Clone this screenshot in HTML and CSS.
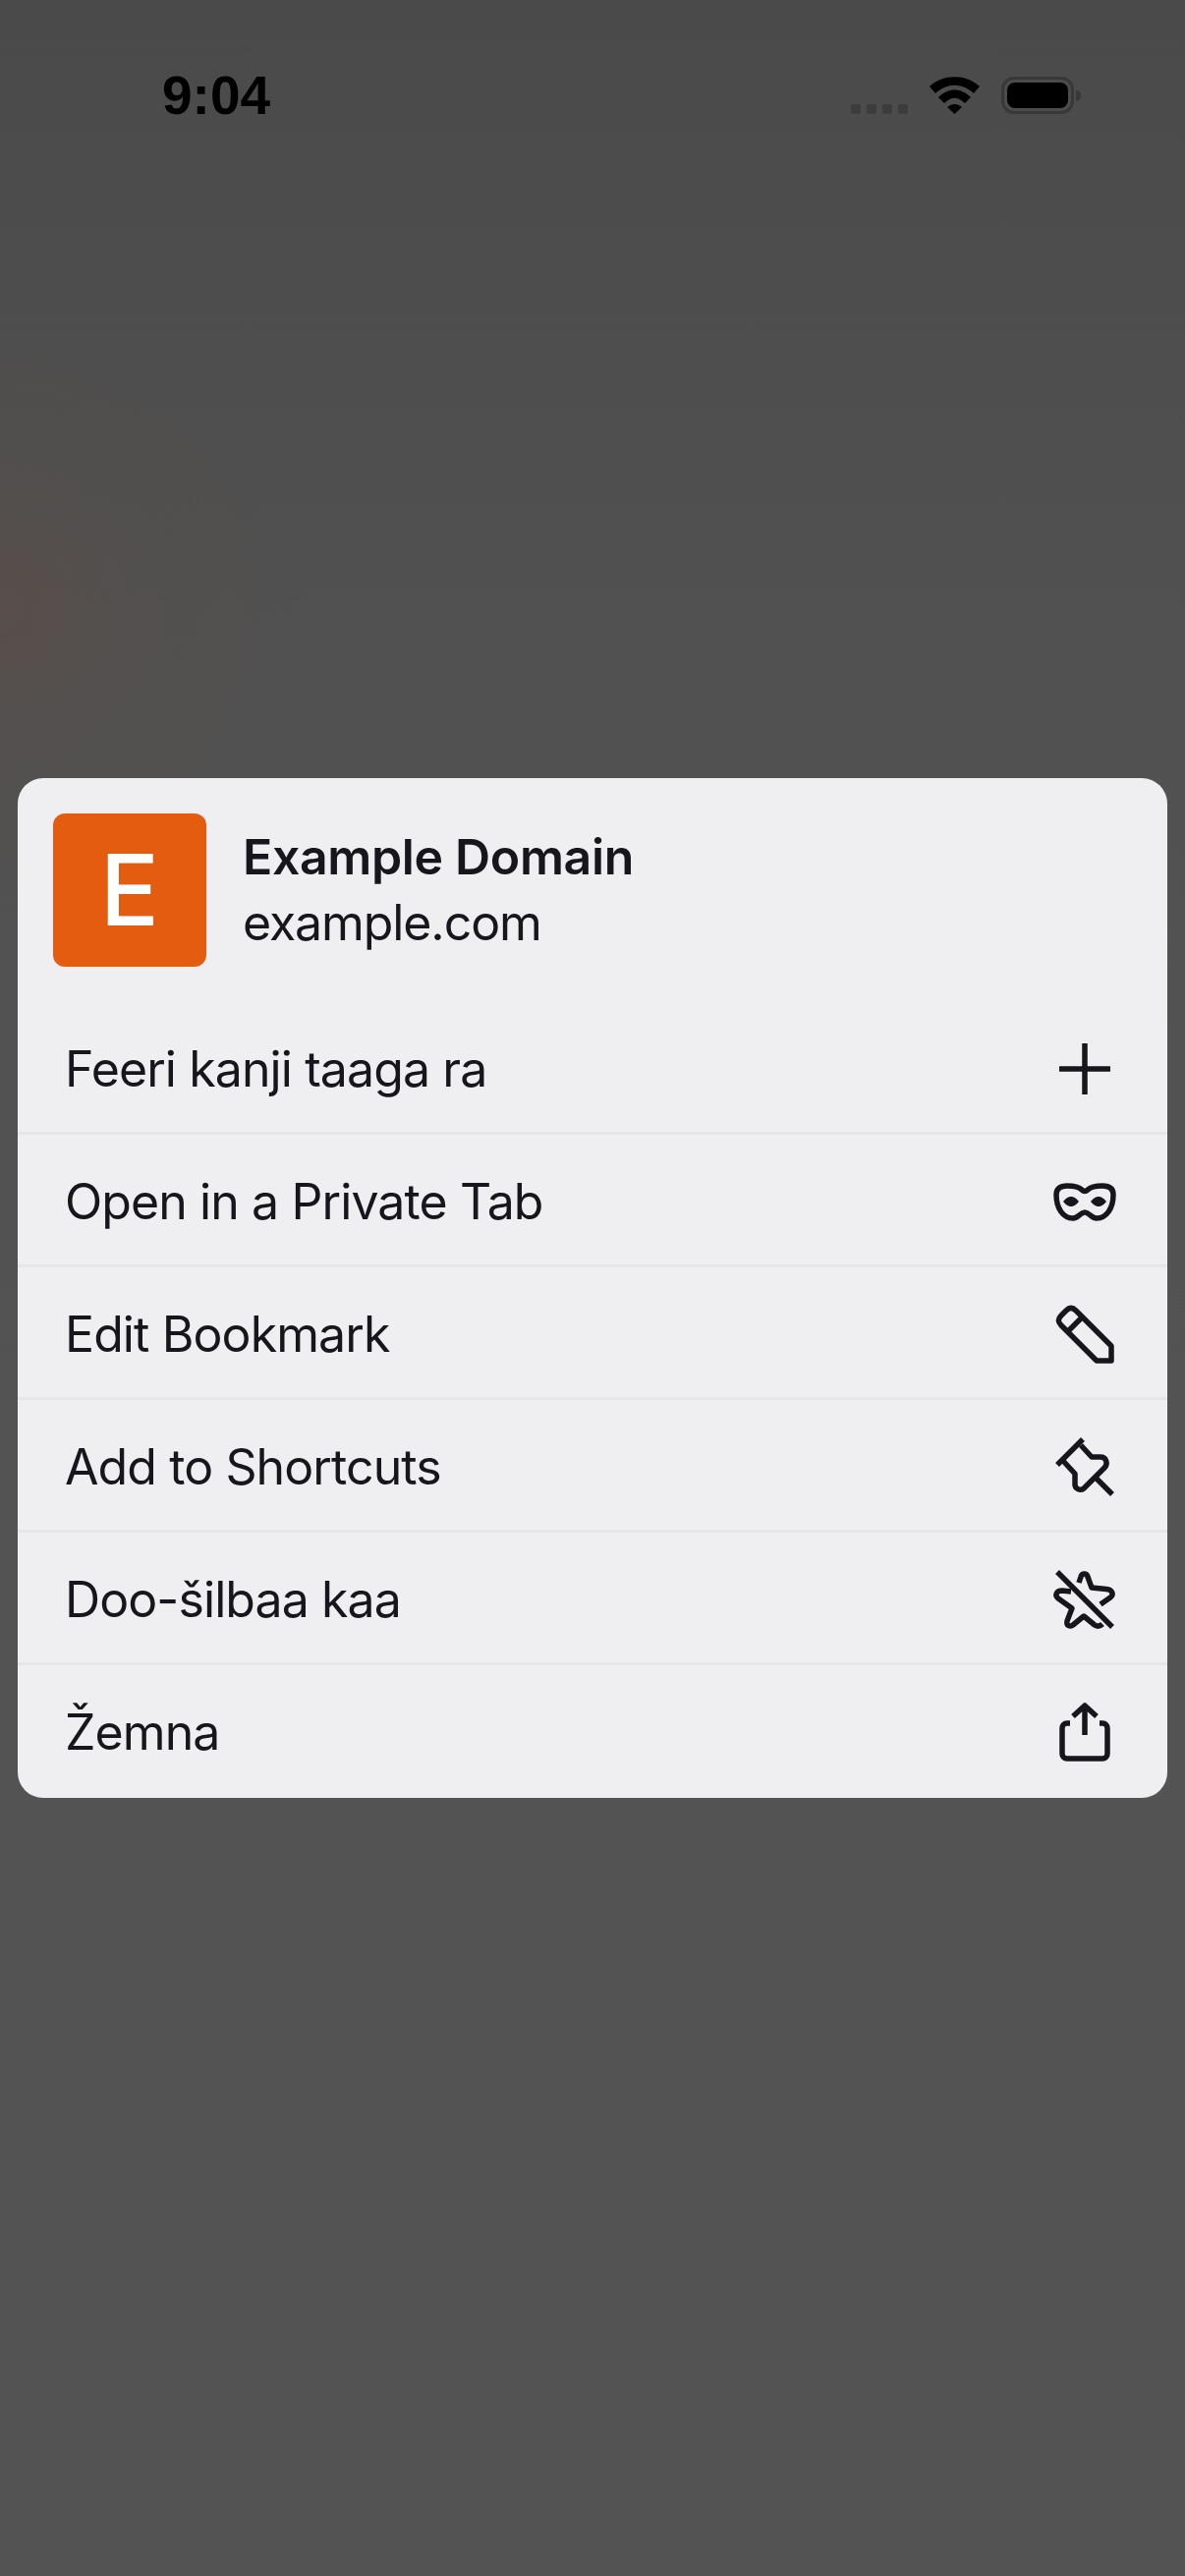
FILE: index.html
```html
<!DOCTYPE html>
<html lang="en">
<head>
    <meta charset="UTF-8">
    <meta name="viewport" content="width=device-width, initial-scale=1.0">
    <title>Example Domain menu</title>
    <link rel="stylesheet" href="styles.css">
</head>
<body>
    <div class="status-bar">
        <span class="time">9:04</span>
        <div class="status-icons">
            <div class="signal"><i></i><i></i><i></i><i></i></div>
            <svg class="wifi" width="51" height="38" viewBox="0 0 51 38">
                <path d="M0 10C14 -3 37 -3 51 10L45 17C33 6 18 6 6 17Z"/>
                <path d="M9 21C19 11 32 11 42 21L36 27C28 20 23 20 15 27Z"/>
                <path d="M18 31Q25.500 25 33 31L25.500 38Z"/>
            </svg>
            <div class="battery"><div class="battery-fill"></div></div>
            <div class="battery-cap"></div>
        </div>
    </div>

    <div class="sheet">
        <div class="site-header">
            <div class="site-icon">E</div>
            <div class="site-text">
                <div class="site-title">Example Domain</div>
                <div class="site-url">example.com</div>
            </div>
        </div>

        <div class="menu-row">
            <span>Feeri kanji taaga ra</span>
            <svg class="icon" viewBox="0 0 60 60"><path d="M30 4V56M4 30H56"/></svg>
        </div>
        <div class="menu-row">
            <span>Open in a Private Tab</span>
            <svg class="icon" viewBox="0 0 60 60">
                <path d="M12 14C20 14 24 15 27 18C29 20 31 20 33 18C36 15 40 14 48 14C55 14 59 17 59 23C59 37 52 47 42 47C36 47 35 41 30 41C25 41 24 47 18 47C8 47 1 37 1 23C1 17 5 14 12 14Z"/>
                <path class="solid" d="M8 30C11 26 14 25 16 25C18 25 21 26 24 30C21 34 18 35 16 35C14 35 11 34 8 30Z"/>
                <path class="solid" d="M36 30C39 26 42 25 44 25C46 25 49 26 52 30C49 34 46 35 44 35C42 35 39 34 36 30Z"/>
            </svg>
        </div>
        <div class="menu-row">
            <span>Edit Bookmark</span>
            <svg class="icon" viewBox="0 0 60 60">
                <path d="M21 6L57 42V57H42L6 21C2.500 17.500 2.500 14.500 6 11L11 6C14.500 2.500 17.500 2.500 21 6Z"/>
                <path d="M26 14L13 27"/>
            </svg>
        </div>
        <div class="menu-row">
            <span>Add to Shortcuts</span>
            <svg class="icon" viewBox="0 0 60 60">
                <path d="M2 28L28 2"/>
                <path d="M26 8L37 20H46C52 20 54 27 50 31L29 52C25 55 20 52 20 48V37L8 24"/>
                <path d="M41 41L58 58"/>
            </svg>
        </div>
        <div class="menu-row">
            <span>Doo-šilbaa kaa</span>
            <svg class="icon" viewBox="0 0 60 60">
                <path d="M24 13L26 7C27 3 32 3 33 7L37 18L52 19.500C58 20 60 25 56 28L46 35"/>
                <path d="M16 22L7 21C1 21 -1 26 3 29L17 39L12 52C11 57 15 58 18 56L29 47L40 56C43 58 46 57 48 55"/>
                <path d="M2 2L58 58"/>
            </svg>
        </div>
        <div class="menu-row">
            <span>Žemna</span>
            <svg class="icon" viewBox="0 0 60 60">
                <path d="M15 21H12C9 21 7 23 7 26V52C7 55 9 57 12 57H48C51 57 53 55 53 52V26C53 23 51 21 48 21H45"/>
                <path d="M30 33V3M18 14L30 3L42 14"/>
            </svg>
        </div>
    </div>
</body>
</html>
```
FILE: styles.css
```css
html, body {
    margin: 0;
    padding: 0;
}

body {
    width: 1206px;
    height: 2622px;
    overflow: hidden;
    font-family: 'Inter', sans-serif;
    background:
        radial-gradient(circle at 0 620px, rgba(98, 74, 66, 0.45) 0, rgba(90, 78, 72, 0.25) 120px, rgba(83, 83, 83, 0) 320px),
        linear-gradient(to bottom, #4a4a4a 0%, #515151 25%, #535353 60%, #535353 100%);
    color: #16161c;
}

.status-bar {
    height: 792px;
    box-sizing: border-box;
    padding: 78px 106px 0 165px;
    display: flex;
    justify-content: space-between;
    align-items: flex-start;
}

.time {
    font-family: 'Liberation Sans', sans-serif;
    font-weight: bold;
    font-size: 55px;
    line-height: 38px;
    color: #000;
}

.status-icons {
    display: flex;
    align-items: flex-start;
}

.signal {
    display: flex;
    gap: 6px;
    margin-top: 28px;
    margin-right: 22px;
}

.signal i {
    width: 10px;
    height: 10px;
    border-radius: 3px;
    background: #3c3c3c;
}

.wifi {
    margin-right: 22px;
    fill: #000;
}

.battery {
    width: 74px;
    height: 38px;
    box-sizing: border-box;
    border: 3px solid #383838;
    border-radius: 13px;
    padding: 3px;
}

.battery-fill {
    height: 100%;
    background: #000;
    border-radius: 8px;
}

.battery-cap {
    width: 5px;
    height: 11px;
    margin-top: 14px;
    margin-left: 2px;
    background: #383838;
    border-radius: 0 5px 5px 0;
}

.sheet {
    margin-left: 18px;
    width: 1170px;
    background: #efeff2;
    border-radius: 26px;
    overflow: hidden;
}

.site-header {
    display: flex;
    align-items: center;
    gap: 37px;
    padding: 36px;
}

.site-icon {
    width: 156px;
    height: 156px;
    flex-shrink: 0;
    background: #e35c0f;
    border-radius: 12px;
    color: #fff;
    font-size: 100px;
    font-weight: 500;
    line-height: 156px;
    text-align: center;
}

.site-title {
    font-size: 50px;
    font-weight: 600;
    line-height: 67px;
    letter-spacing: -0.35px;
}

.site-url {
    font-size: 50px;
    line-height: 67px;
    letter-spacing: -1.1px;
}

.menu-row {
    height: 135px;
    box-sizing: border-box;
    padding: 4px 54px 0 48px;
    display: flex;
    justify-content: space-between;
    align-items: center;
    font-size: 50px;
    letter-spacing: -0.9px;
    border-bottom: 3px solid #e6e6ea;
}

.menu-row:last-child {
    border-bottom-color: transparent;
}

.icon {
    width: 60px;
    height: 60px;
    overflow: visible;
    fill: none;
    stroke: #16161c;
    stroke-width: 5.500;
    stroke-linejoin: round;
}

.icon .solid {
    fill: #16161c;
    stroke: none;
}
```
